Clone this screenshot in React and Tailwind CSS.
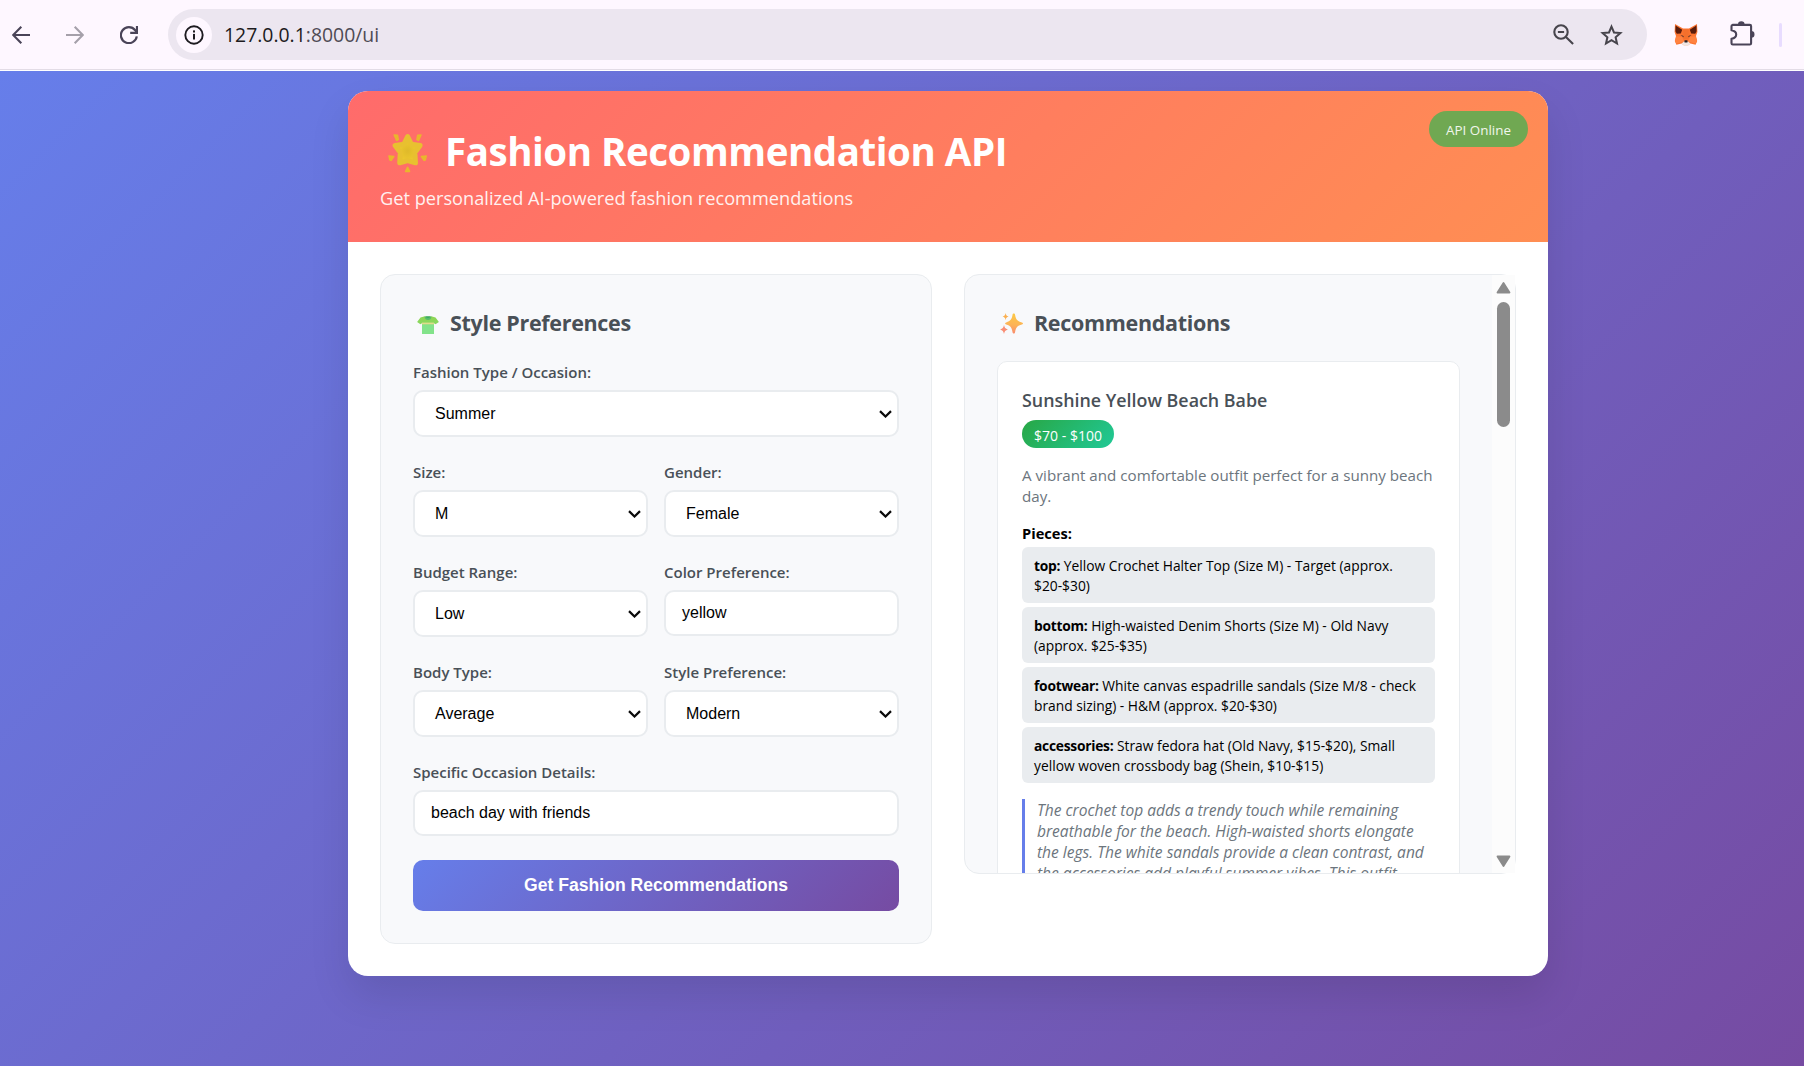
import React from "react";

const SANS = "font-['Open_Sans','Noto_Sans',sans-serif]";
const ARIAL = "font-['Liberation_Sans',Arial,sans-serif]";

function BackIcon() {
  return (
    <svg className="h-[18px] w-[18px]" viewBox="0 0 18 18" fill="none" stroke="#4a4458" strokeWidth="2.1">
      <path d="M18 9H1.6M9.3 0.8L1.2 9l8.1 8.2" />
    </svg>
  );
}

function ForwardIcon() {
  return (
    <svg className="h-[18px] w-[18px]" viewBox="0 0 18 18" fill="none" stroke="#a5a0aa" strokeWidth="2.1">
      <path d="M0 9h16.4M8.7 0.8L16.8 9l-8.1 8.2" />
    </svg>
  );
}

function ReloadIcon() {
  return (
    <svg className="h-[18px] w-[18px]" viewBox="0 0 18 18" fill="none" stroke="#4a4458" strokeWidth="2.2">
      <path d="M16.8 10.4A8 8 0 1 1 15.2 4.2l1.2 1.6" />
      <path d="M17 0v6.9h-6.8" />
    </svg>
  );
}

function InfoIcon() {
  return (
    <svg className="h-5 w-5" viewBox="0 0 20 20">
      <circle cx="10" cy="10" r="8.7" fill="none" stroke="#1d1b20" strokeWidth="1.9" />
      <rect x="9" y="8.9" width="2" height="5.6" fill="#1d1b20" />
      <rect x="9" y="5.4" width="2" height="2.1" fill="#1d1b20" />
    </svg>
  );
}

function ZoomOutIcon() {
  return (
    <svg className="h-[21px] w-[21px]" viewBox="0 0 21 21" fill="none" stroke="#47454c" strokeWidth="2.1">
      <circle cx="8" cy="8" r="6.7" />
      <path d="M4.9 8h6.2M12.7 12.7l7.4 7.4" />
    </svg>
  );
}

function StarIcon() {
  return (
    <svg className="h-[22px] w-[23px]" viewBox="0 0 23 22" fill="none" stroke="#47454c" strokeWidth="2">
      <path strokeLinejoin="miter" d="M11.5 2.6l2.5 5.9 6.4.6-4.8 4.2 1.4 6.2-5.5-3.3L6 19.500l1.400-6.200L2.600 9.100l6.400-.6z" />
    </svg>
  );
}

function FoxIcon() {
  return (
    <svg className="h-[22px] w-[24px]" viewBox="0 0 24 22">
      <path d="M1 0l8 4.500h6L23 0l.4 8-1.400 4 1.200 5-1.600 3.800-5.200-1.200-2.200 1.600H9.800l-2.200-1.600-5.200 1.200L.8 17 2 12 .6 8z" fill="#fb7430" />
      <path d="M1.600 1.500l6.600 4.200-1.400 3.900-4 .2L1.400 7.200zM22.400 1.500l-6.600 4.200 1.400 3.900 4 .2 1.400-2.600z" fill="#5a1d0c" />
      <path d="M2.400 12.200l5.400.6 2.500 4.700-8 2-1.400-2.500zM21.600 12.200l-5.400.6-2.500 4.700 8 2 1.400-2.500z" fill="#ff8240" />
      <path d="M6.500 11l3.200.9.200 1.700zM17.500 11l-3.200.9-.2 1.700z" fill="#31242a" />
      <path d="M9.200 5.500h5.600L14.200 15H9.800z" fill="#f4702c" />
      <path d="M7.600 19.400l2.600-2.200h3.600l2.600 2.200-2.400 2.200h-4z" fill="#efe6e4" />
      <path d="M10.300 16.900l.5-.6h2.400l.5.6-.3 1.500h-2.800z" fill="#2b2024" />
    </svg>
  );
}

function PuzzleIcon() {
  return (
    <svg className="h-[25px] w-[25px]" viewBox="0 0 25 25">
      <path
        d="M2.500 3.900h17.300a1.300 1.300 0 0 1 1.300 1.300v17a1.300 1.300 0 0 1-1.300 1.300H2.800a1.300 1.300 0 0 1-1.300-1.300v-4.400c3.400-.6 4.700-2.300 4.700-4.300s-1.300-3.700-4.700-4.300V5.200a1.300 1.300 0 0 1 1-1.300z"
        fill="none" stroke="#4a4458" strokeWidth="2.100" strokeLinejoin="round"
      />
      <path d="M8 3.600a3.300 3.300 0 0 1 6.600 0zM21.200 10.100a3.300 3.300 0 0 1 0 6.600z" fill="#4a4458" />
    </svg>
  );
}

function GlowingStar() {
  return (
    <svg className="mt-[3px] h-10 w-10" viewBox="0 0 40 40">
      <defs>
        <radialGradient id="starBody" cx="0.5" cy="0.55" r="0.55">
          <stop offset="0" stopColor="#dfb92a" />
          <stop offset="0.75" stopColor="#eec92e" />
          <stop offset="1" stopColor="#dcae2c" />
        </radialGradient>
      </defs>
      <path
        d="M19.600 3.500l3.700 7.700 8.800 1.300-5.200 7 .6 10.300-7.900-2.200-7.900 2.200.6-10.300-5.200-7 8.800-1.300z"
        fill="url(#starBody)" stroke="#e8c030" strokeWidth="5" strokeLinejoin="round"
      />
      <path
        d="M6.200 2l3.300.3.800 4.300-1.600.8zM33 2l-3.300.3-.8 4.300 1.600.8zM1 23l4.800.6-2.600 3.800-1.300-.4zM38.200 23l-4.800.6 2.600 3.800 1.300-.4zM19.600 34.200l2 4.200h-4z"
        fill="#e9b62c" stroke="#e9b62c" strokeWidth="1.500" strokeLinejoin="round"
      />
    </svg>
  );
}

function Shirt() {
  return (
    <svg className="h-[18px] w-[22px]" viewBox="0 0 22 18">
      <defs>
        <linearGradient id="shirtTop" x1="0" y1="0" x2="0" y2="1">
          <stop offset="0" stopColor="#8fd552" />
          <stop offset="1" stopColor="#7ddb70" />
        </linearGradient>
      </defs>
      <path d="M7 .4h8l3.500 1.200L21.900 6l-3.400 2.200-1.600-.9V18H5V7.300l-1.600.9L.1 6l3.400-4.400z" fill="url(#shirtTop)" />
      <path d="M5 8.200h11.900V18H5z" fill="#82e38a" />
      <path d="M5 6.600h11.900v1.700H5z" fill="#e0dc8c" />
      <path d="M7.400.4c.4 2.400 1.900 3.500 3.600 3.500s3.200-1.100 3.600-3.500z" fill="#55bb6a" />
      <path d="M8.800.4c.4 1 1.200 1.500 2.200 1.500s1.800-.5 2.200-1.500z" fill="#3da866" />
    </svg>
  );
}

function Sparkles() {
  return (
    <svg className="h-[21px] w-[23px]" viewBox="0 0 23 21">
      <defs>
        <linearGradient id="sparkle" x1="0.3" y1="0" x2="0.2" y2="1">
          <stop offset="0" stopColor="#fcc846" />
          <stop offset="0.55" stopColor="#fcb357" />
          <stop offset="1" stopColor="#f98a70" />
        </linearGradient>
      </defs>
      <path d="M13.800.6c.7 0 1 .3 1.200 1 .9 5 2 6.500 6.900 7.900.8.200 1.100.5 1.100 1s-.3.800-1.100 1c-4.900 1.400-6 2.900-6.900 7.900-.2.700-.5 1-1.200 1s-1-.3-1.200-1c-.9-5-2-6.500-6.400-7.900-.8-.2-1.100-.5-1.100-1s.3-.8 1.100-1C10.600 8.100 11.700 6.600 12.600 1.600c.2-.7.5-1 1.200-1z" fill="url(#sparkle)" />
      <path d="M5.600 0c.5 2.400 1 2.900 3 3.600-2 .7-2.500 1.200-3 3.600-.5-2.400-1-2.900-3-3.600 2-.7 2.500-1.200 3-3.600z" fill="#fbb050" />
      <path d="M4 12c.6 2.900 1.400 3.700 3.900 4.500C5.400 17.300 4.600 18.100 4 21c-.6-2.900-1.400-3.700-3.900-4.500C2.600 15.700 3.400 14.900 4 12z" fill="#f98d74" />
    </svg>
  );
}

function Chevron() {
  return (
    <svg className="pointer-events-none mr-[5px] h-[8px] w-[13px] shrink-0" viewBox="0 0 13 8" fill="none" stroke="#0a0a0a" strokeWidth="2.200">
      <path d="M1 1.100l5.500 5.400L12 1.100" />
    </svg>
  );
}

function Field({ label, value, select }) {
  return (
    <div className="h-[100px] min-w-0 flex-1">
      <div className={`${SANS} mb-[6px] h-6 whitespace-nowrap text-[15px] font-semibold leading-6 text-[#495057]`}>{label}</div>
      {select ? (
        <div className={`${ARIAL} flex h-[47px] items-center justify-between rounded-[10px] border-2 border-[#e9ecef] bg-white pl-5 text-base text-black`}>
          <span>{value}</span>
          <Chevron />
        </div>
      ) : (
        <div className={`${ARIAL} flex h-[46px] items-center rounded-[10px] border-2 border-[#e9ecef] bg-white px-4 pb-px text-base text-black`}>
          {value}
        </div>
      )}
    </div>
  );
}

const PIECES = [
  ["top:", "Yellow Crochet Halter Top (Size M) - Target (approx.", "$20-$30)"],
  ["bottom:", "High-waisted Denim Shorts (Size M) - Old Navy", "(approx. $25-$35)"],
  ["footwear:", "White canvas espadrille sandals (Size M/8 - check", "brand sizing) - H&M (approx. $20-$30)"],
  ["accessories:", "Straw fedora hat (Old Navy, $15-$20), Small", "yellow woven crossbody bag (Shein, $10-$15)"],
];

function Toolbar() {
  return (
    <div className="flex h-[71px] items-start border-b border-white bg-[#fef7ff]">
      <div className="flex h-[70px] w-full items-center border-b border-[#e3dce6]">
        <div className="flex w-[168px] items-center gap-9 pl-3">
          <BackIcon />
          <ForwardIcon />
          <ReloadIcon />
        </div>
        <div className="flex h-[51px] w-[1479px] items-center rounded-full bg-[#ece6f0] pl-2 pr-[24px]">
          <div className="flex h-9 w-9 items-center justify-center rounded-full bg-[#fef7ff]">
            <InfoIcon />
          </div>
          <div className={`${SANS} ml-3 flex-1 text-[19.4px] leading-6 text-[#1d1b20]`}>
            127.0.0.1<span className="text-[#4f4b55]">:8000/ui</span>
          </div>
          <div className="flex items-center gap-[26px]">
            <ZoomOutIcon />
            <StarIcon />
          </div>
        </div>
        <div className="ml-[27px] flex items-center">
          <FoxIcon />
          <div className="ml-8 mb-[3px]"><PuzzleIcon /></div>
          <div className="ml-6 h-6 w-[3px] rounded-full bg-[#e8dcff]" />
        </div>
      </div>
    </div>
  );
}

function Header() {
  return (
    <div className={`${SANS} relative h-[151px] bg-[linear-gradient(135deg,#ff6b6b,#ff8e53)] p-8 text-white`}>
      <h1 className="flex h-14 items-center whitespace-nowrap pl-2 text-[38.5px] font-bold leading-[56px] tracking-[-0.46px]">
        <GlowingStar />
        <span className="ml-[17px]">Fashion Recommendation API</span>
      </h1>
      <p className="mt-[7px] text-[18.2px] leading-6 opacity-90">Get personalized AI-powered fashion recommendations</p>
      <div className="absolute right-5 top-5 flex h-9 w-[99px] items-center justify-center rounded-full bg-[#70a852] pt-[2px] text-[13.4px] font-medium text-[#f1f6ec]">
        API Online
      </div>
    </div>
  );
}

function PreferencesPanel() {
  return (
    <div className="h-[670px] w-[552px] rounded-[15px] border border-[#e9ecef] bg-[#f8f9fb] p-8">
      <h2 className={`${SANS} mb-[21px] flex h-8 items-center pl-1 text-[21.5px] font-bold leading-8 tracking-[-0.32px] text-[#495057]`}>
        <span className="mt-1"><Shirt /></span>
        <span className="ml-[11px]">Style Preferences</span>
      </h2>
      <Field label="Fashion Type / Occasion:" value="Summer" select />
      <div className="flex gap-4">
        <Field label="Size:" value="M" select />
        <Field label="Gender:" value="Female" select />
      </div>
      <div className="flex gap-4">
        <Field label="Budget Range:" value="Low" select />
        <Field label="Color Preference:" value="yellow" />
      </div>
      <div className="flex gap-4">
        <Field label="Body Type:" value="Average" select />
        <Field label="Style Preference:" value="Modern" select />
      </div>
      <Field label="Specific Occasion Details:" value="beach day with friends" />
      <button className={`${ARIAL} flex h-[51px] w-full items-center justify-center rounded-[10px] bg-[linear-gradient(135deg,#667eea,#764ba2)] pb-px text-[17.6px] font-bold text-white`}>
        Get Fashion Recommendations
      </button>
    </div>
  );
}

function RecommendationsPanel() {
  return (
    <div className={`${SANS} flex h-[600px] w-[552px] rounded-[15px] border border-[#e9ecef] bg-[#f8f9fb]`}>
      <div className="h-[598px] w-[527px] overflow-hidden rounded-l-[14px] px-8 pt-8">
        <h2 className="mb-[22px] flex h-8 items-center pl-[3px] text-[21.5px] font-bold leading-8 tracking-[-0.32px] text-[#495057]">
          <Sparkles />
          <span className="ml-[11px]">Recommendations</span>
        </h2>
        <div className="h-[700px] rounded-[10px] border border-[#e9ecef] bg-white p-6">
          <h3 className="h-7 text-[17.85px] font-semibold leading-7 text-[#495057]">Sunshine Yellow Beach Babe</h3>
          <div className="mt-[6px] flex h-7 w-[92px] items-center justify-center rounded-full bg-[linear-gradient(135deg,#28a745,#20c997)] pt-[2px] text-[14px] text-white">
            $70 - $100
          </div>
          <p className="mt-[17px] whitespace-nowrap text-[15.15px] leading-[21px] text-[#6c757d]">
            A vibrant and comfortable outfit perfect for a sunny beach<br />day.
          </p>
          <div className="mt-[15px] h-[22px] text-[14.65px] font-bold leading-[22px] text-black">Pieces:</div>
          <div className="mt-[3px] flex flex-col gap-1">
            {PIECES.map(([name, first, second]) => (
              <div key={name} className="h-14 whitespace-nowrap rounded-md bg-[#e9ecef] px-3 pt-[9px] text-[13.8px] leading-5 text-black">
                <b className="tracking-[-0.25px]">{name}</b> {first}<br />{second}
              </div>
            ))}
          </div>
          <p className="mt-4 whitespace-nowrap border-l-[3px] border-[#667eea] pl-3 pt-px text-[15.55px] italic leading-[21px] text-[#6c757d]">
            The crochet top adds a trendy touch while remaining<br />
            breathable for the beach. High-waisted shorts elongate<br />
            the legs. The white sandals provide a clean contrast, and<br />
            the accessories add playful summer vibes. This outfit
          </p>
        </div>
      </div>
      <div className="flex h-[598px] w-[23px] flex-col items-center bg-[#fcfcfc] pl-[2px] pr-[3px]">
        <svg className="mt-[6px] h-[13px] w-[15px]" viewBox="0 0 15 13">
          <path d="M7.500 2L13.500 11.500H1.500z" fill="#8b8b8b" stroke="#8b8b8b" strokeWidth="1.800" strokeLinejoin="round" />
        </svg>
        <div className="mt-2 h-[125px] w-[13px] rounded-full bg-[#8b8b8b]" />
        <svg className="mb-[5px] mt-auto h-[13px] w-[15px]" viewBox="0 0 15 13">
          <path d="M7.500 11L13.500 1.500H1.500z" fill="#8b8b8b" stroke="#8b8b8b" strokeWidth="1.800" strokeLinejoin="round" />
        </svg>
      </div>
    </div>
  );
}

export default function App() {
  return (
    <div className="flex h-[1066px] w-[1804px] flex-col overflow-hidden">
      <Toolbar />
      <div className="flex-1 bg-[linear-gradient(135deg,#667eea_0%,#764ba2_100%)] pl-[348px] pt-5">
        <div className="w-[1200px] overflow-hidden rounded-[20px] bg-white shadow-[0_20px_40px_rgba(0,0,0,0.1)]">
          <Header />
          <div className="flex items-start justify-between p-8">
            <PreferencesPanel />
            <RecommendationsPanel />
          </div>
        </div>
      </div>
    </div>
  );
}
